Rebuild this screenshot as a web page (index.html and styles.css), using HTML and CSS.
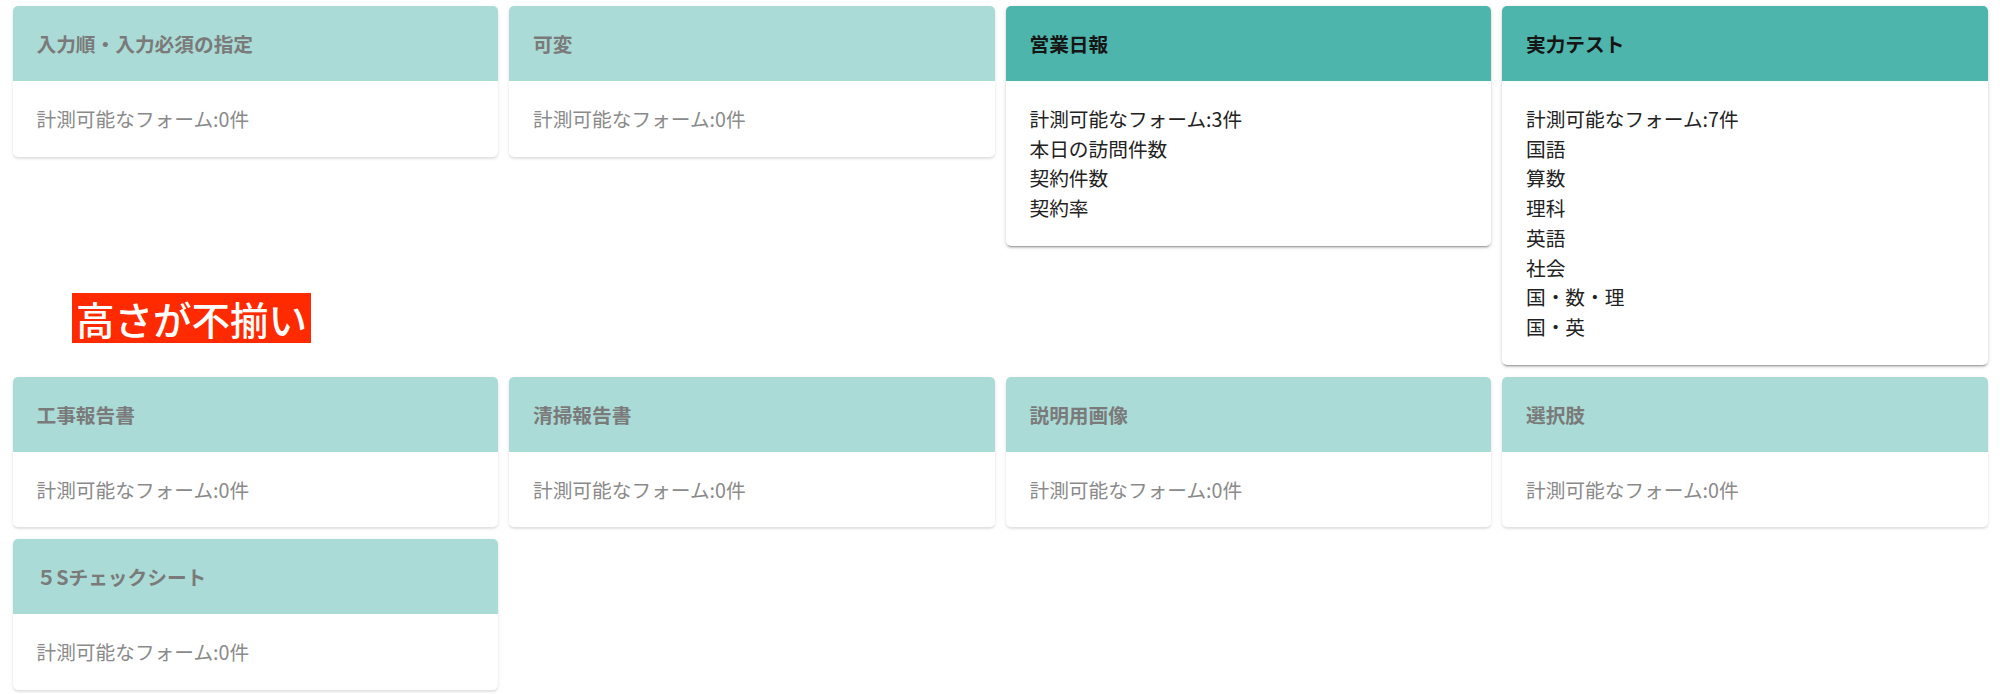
FILE: index.html
```html
<!DOCTYPE html>
<html lang="ja">
<head>
<meta charset="utf-8">
<title>フォーム一覧</title>
<link rel="stylesheet" href="styles.css">
</head>
<body>
<div class="page">
  <div class="grid">
    <div class="card is-off">
      <div class="card-head">入力順・入力必須の指定</div>
      <div class="card-body"><div>計測可能なフォーム:0件</div></div>
    </div>
    <div class="card is-off">
      <div class="card-head">可変</div>
      <div class="card-body"><div>計測可能なフォーム:0件</div></div>
    </div>
    <div class="card is-on">
      <div class="card-head">営業日報</div>
      <div class="card-body">
        <div>計測可能なフォーム:3件</div>
        <div>本日の訪問件数</div>
        <div>契約件数</div>
        <div>契約率</div>
      </div>
    </div>
    <div class="card is-on">
      <div class="card-head">実力テスト</div>
      <div class="card-body">
        <div>計測可能なフォーム:7件</div>
        <div>国語</div>
        <div>算数</div>
        <div>理科</div>
        <div>英語</div>
        <div>社会</div>
        <div>国・数・理</div>
        <div>国・英</div>
      </div>
    </div>
    <div class="card is-off">
      <div class="card-head">工事報告書</div>
      <div class="card-body"><div>計測可能なフォーム:0件</div></div>
    </div>
    <div class="card is-off">
      <div class="card-head">清掃報告書</div>
      <div class="card-body"><div>計測可能なフォーム:0件</div></div>
    </div>
    <div class="card is-off">
      <div class="card-head">説明用画像</div>
      <div class="card-body"><div>計測可能なフォーム:0件</div></div>
    </div>
    <div class="card is-off">
      <div class="card-head">選択肢</div>
      <div class="card-body"><div>計測可能なフォーム:0件</div></div>
    </div>
    <div class="card is-off">
      <div class="card-head">５Sチェックシート</div>
      <div class="card-body"><div>計測可能なフォーム:0件</div></div>
    </div>
  </div>
  <div class="note">高さが不揃い</div>
</div>
</body>
</html>
```
FILE: styles.css
```css
html, body {
  margin: 0;
  padding: 0;
  background: #ffffff;
}

body {
  font-family: "Noto Sans CJK JP", "Noto Sans", "Liberation Sans", sans-serif;
}

.page {
  position: relative;
}

.grid {
  display: grid;
  grid-template-columns: repeat(4, 1fr);
  column-gap: 11px;
  row-gap: 12px;
  padding: 6px 12.5px;
  align-items: start;
}

.card {
  background: #ffffff;
  border-radius: 5px;
  overflow: hidden;
}

.card-head {
  height: 75px;
  display: flex;
  align-items: center;
  padding: 0 24px;
  font-size: 19.7px;
  font-weight: 700;
}

.card-body {
  padding: 23px 24px;
  font-size: 19.7px;
  line-height: 29.7px;
}

.is-off {
  box-shadow: 0 2px 2px rgba(0, 0, 0, 0.08), 0 1px 4px rgba(0, 0, 0, 0.07);
}

.is-off .card-head {
  background: #aadbd6;
  color: #7a7a7a;
}

.is-off .card-body {
  color: #8a8a8a;
}

.is-on {
  box-shadow: 0 3px 1px -2px rgba(0, 0, 0, 0.2), 0 2px 2px rgba(0, 0, 0, 0.14), 0 1px 5px rgba(0, 0, 0, 0.12);
}

.is-on .card-head {
  background: #4db5ab;
  color: #151515;
}

.is-on .card-body {
  color: #222222;
}

.note {
  position: absolute;
  left: 72px;
  top: 293px;
  height: 50px;
  line-height: 50px;
  padding: 0 4px;
  background: #ff2a00;
  color: #ffffff;
  font-size: 38.5px;
  font-weight: 500;
  white-space: nowrap;
}
```
